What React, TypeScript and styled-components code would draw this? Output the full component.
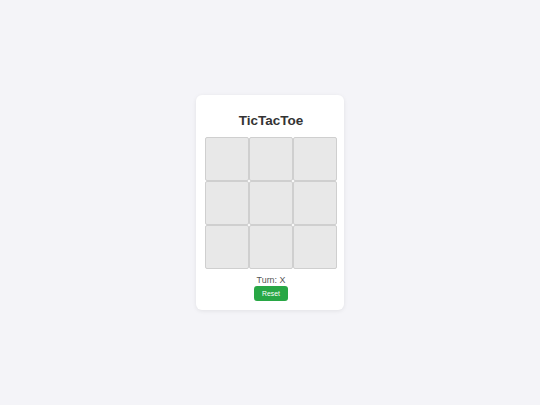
import React, { useState } from "react";
import styled, { createGlobalStyle } from "styled-components";

const GlobalStyle = createGlobalStyle`
  html, body {
    margin: 0;
    padding: 0;
    background: #f4f4f8;
    font-family: "Liberation Sans", Arial, sans-serif;
  }
`;

const Page = styled.div`
  display: flex;
  align-items: center;
  justify-content: center;
  width: 540px;
  height: 405px;
`;

const Card = styled.div`
  width: 148px;
  box-sizing: border-box;
  padding: 9px 7px 9px 9px;
  background: #fff;
  border-radius: 6px;
  box-shadow: 0 1px 4px rgba(0, 0, 0, 0.08);
  display: flex;
  flex-direction: column;
  align-items: center;
`;

const Title = styled.h1`
  margin: 8px 0 7px;
  font-size: 13.5px;
  line-height: 18px;
  font-weight: bold;
  color: #333;
`;

const Board = styled.div`
  display: grid;
  grid-template-columns: repeat(3, 44px);
  grid-template-rows: repeat(3, 44px);
`;

const Cell = styled.button`
  box-sizing: border-box;
  width: 44px;
  height: 44px;
  margin: 0;
  padding: 0;
  background: #e8e8e8;
  border: 1px solid #cfcfcf;
  border-radius: 2px;
  font-family: inherit;
  font-size: 20px;
  font-weight: bold;
  color: #333;
  cursor: pointer;
`;

const Status = styled.div`
  margin-top: 6px;
  font-size: 8.9px;
  line-height: 11px;
  color: #555;
`;

const ResetButton = styled.button`
  margin-top: 0;
  width: 34px;
  height: 15px;
  padding: 0;
  border: none;
  border-radius: 3px;
  background: #28a745;
  color: #fff;
  font-family: inherit;
  font-size: 6.8px;
  cursor: pointer;
`;

export default function App() {
  const [cells, setCells] = useState<string[]>(Array(9).fill(""));
  const [turn, setTurn] = useState("X");

  const play = (i: number) => {
    if (cells[i]) return;
    const next = [...cells];
    next[i] = turn;
    setCells(next);
    setTurn(turn === "X" ? "O" : "X");
  };

  return (
    <>
      <GlobalStyle />
      <Page>
        <Card>
          <Title>TicTacToe</Title>
          <Board>
            {cells.map((c, i) => (
              <Cell key={i} onClick={() => play(i)}>
                {c}
              </Cell>
            ))}
          </Board>
          <Status>Turn: {turn}</Status>
          <ResetButton
            onClick={() => {
              setCells(Array(9).fill(""));
              setTurn("X");
            }}
          >
            Reset
          </ResetButton>
        </Card>
      </Page>
    </>
  );
}
